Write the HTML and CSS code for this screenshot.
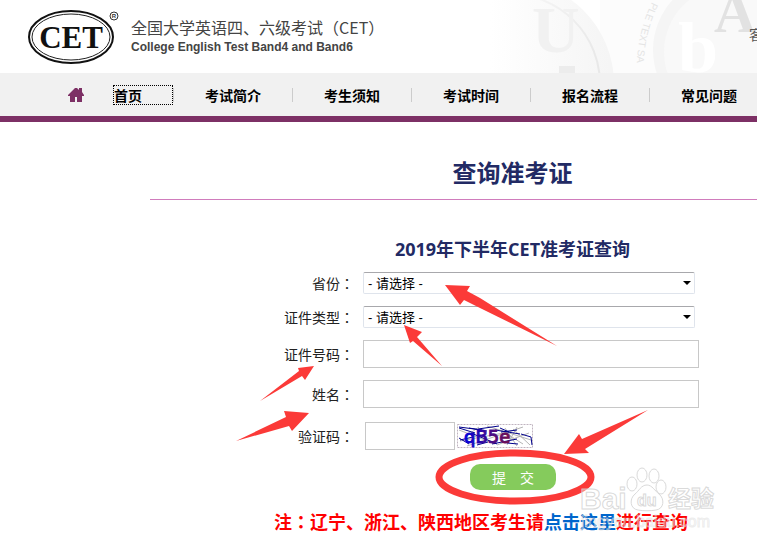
FILE: index.html
```html
<!DOCTYPE html>
<html lang="zh-CN">
<head>
    <meta charset="UTF-8">
    <meta name="viewport" content="width=device-width, initial-scale=1.0">
    <title>查询准考证</title>
    <link rel="stylesheet" href="styles.css">
</head>
<body>

    <header>
        <svg class="logo" width="92" height="58" viewBox="0 0 92 58" aria-label="CET">
            <ellipse cx="43" cy="29" rx="42" ry="26" fill="#fff" stroke="#111" stroke-width="2"/>
            <ellipse cx="43" cy="29" rx="39" ry="23" fill="none" stroke="#222" stroke-width="1"/>
            <text x="43" y="40" class="logo-text">CET</text>
            <circle cx="86" cy="8" r="4" fill="none" stroke="#333"/>
            <text x="86" y="10" class="logo-mark">R</text>
        </svg>
        <div class="site-name">
            <p class="name-cn">全国大学英语四、六级考试（CET）</p>
            <p class="name-en">College English Test Band4 and Band6</p>
        </div>
        <svg class="header-art" width="267" height="73" viewBox="0 0 267 73" aria-hidden="true">
            <defs>
                <linearGradient id="fade" gradientUnits="userSpaceOnUse" x1="0" x2="120" y1="0" y2="0">
                    <stop offset="0" stop-color="#fff"/>
                    <stop offset="1" stop-color="#f5f5f5"/>
                </linearGradient>
                <linearGradient id="rim" gradientUnits="userSpaceOnUse" x1="0" x2="110" y1="0" y2="0">
                    <stop offset="0" stop-color="#fff"/>
                    <stop offset="1" stop-color="#e8e8e8"/>
                </linearGradient>
            </defs>
            <rect x="110" width="157" height="73" fill="#fcfcfc"/>
            <circle cx="20" cy="84" r="104" fill="url(#fade)"/>
            <circle cx="20" cy="84" r="90" fill="url(#fade)" stroke="url(#rim)" stroke-width="2"/>
            <text x="42" y="52" class="art-letter art-u">U</text>
            <rect x="69" y="66" width="16" height="7" fill="#ececec"/>
            <path id="ring" d="M162 2Q146 34 147 73" fill="none"/>
            <text class="art-ring"><textPath href="#ring">PLE TEXT SA</textPath></text>
            <circle cx="237" cy="50" r="74" fill="#f5f5f5"/>
            <circle cx="240" cy="52" r="66" fill="#f9f9f9"/>
            <text x="188" y="72" class="art-letter art-b">b</text>
            <text x="224" y="32" class="art-letter art-a">A</text>
        </svg>
        <a href="#" class="service">客服</a>
    </header>

    <nav>
        <svg class="home-icon" width="16" height="14" viewBox="0 0 16 14" aria-hidden="true">
            <path d="M7 0h2l2 2V0h3v4l2 3v1h-2v6H9V9H7v5H2V8H0V7z" fill="#7d3065"/>
        </svg>
        <a href="#" class="home-link">首页</a>
        <ul>
            <li><a href="#">考试简介</a></li>
            <li><a href="#">考生须知</a></li>
            <li><a href="#">考试时间</a></li>
            <li><a href="#">报名流程</a></li>
            <li><a href="#">常见问题</a></li>
        </ul>
    </nav>

    <main>
        <h1>查询准考证</h1>

        <form>
            <h2>2019年下半年CET准考证查询</h2>

            <div class="row">
                <label for="province">省份<span lang="zh-TW" class="colon">：</span></label>
                <div class="select-box">
                    <select id="province"><option>- 请选择 -</option></select>
                </div>
            </div>
            <div class="row">
                <label for="id-type">证件类型<span lang="zh-TW" class="colon">：</span></label>
                <div class="select-box">
                    <select id="id-type"><option>- 请选择 -</option></select>
                </div>
            </div>
            <div class="row">
                <label for="id-number">证件号码<span lang="zh-TW" class="colon">：</span></label>
                <input type="text" id="id-number">
            </div>
            <div class="row">
                <label for="name">姓名<span lang="zh-TW" class="colon">：</span></label>
                <input type="text" id="name">
            </div>
            <div class="row code-row">
                <label for="code">验证码<span lang="zh-TW" class="colon">：</span></label>
                <div class="code">
                    <input type="text" id="code">
                    <svg width="76" height="24" viewBox="0 0 76 24" aria-hidden="true">
                        <defs>
                            <linearGradient id="ink" gradientUnits="userSpaceOnUse" x1="6" x2="57" y1="0" y2="0">
                                <stop offset="0" stop-color="#0000e0"/>
                                <stop offset="1" stop-color="#801040"/>
                            </linearGradient>
                        </defs>
                        <rect x="0.5" y="0.5" width="75" height="23" fill="#fff" stroke="#c0b4c0" stroke-dasharray="2 1"/>
                        <path d="M2 6L38 20M10 22L66 3M30 2L74 16M40 21L72 9M3 17L52 8M48 4L60 22M56 5L73 21M22 3L8 13M60 3L50 21M66 20L44 6" fill="none" stroke="#b5b5b5"/>
                        <path d="M2 3L25 6M12 4L30 7M2 14L12 20M3 16L16 13M14 9L40 20M21 5L42 2M38 6L63 10M35 20L60 15M50 19L61 20M64 10L74 13L75 21M43 4L52 8M20 21L31 18M2 4L18 9M44 8L60 6" fill="none" stroke="#00008b"/>
                        <text x="7" y="19" class="code-text">qB5e</text>
                    </svg>
                </div>
            </div>

            <button type="button" class="submit">提　交</button>
            <p class="note">注<span lang="zh-TW" class="colon">：</span>辽宁、浙江、陕西地区考生请<a href="#">点击这里</a>进行查询</p>
        </form>
    </main>

    <!-- guide arrows and watermark lying over the form -->
    <svg class="guide" width="757" height="549" viewBox="0 0 757 549" aria-hidden="true">
        <g fill="#fb3a38">
            <path d="M445 285L470 286L467 291L480 298L557 346L480 308L464 300L460 305z"/>
            <path d="M404 325L422 332L417 337L442 366L413 341L410 343z"/>
            <path d="M314 366L298 368L299 371L260 401L302 376L305 380z"/>
            <path d="M309 413L284 411L286 417L236 441L289 426L292 431z"/>
            <path d="M564 454L579 434L582 439L648 410L585 449L589 453z"/>
        </g>
        <ellipse cx="515" cy="477" rx="76" ry="24" fill="none" stroke="#fb3a38" stroke-width="7"/>
        <g class="watermark">
            <text x="580" y="509" class="wm-bai">Bai</text>
            <ellipse cx="632" cy="484" rx="5" ry="7"/>
            <ellipse cx="642" cy="475" rx="5" ry="7"/>
            <ellipse cx="654" cy="476" rx="5" ry="7"/>
            <ellipse cx="661" cy="487" rx="5" ry="7"/>
            <path d="M647 485c-6 0-8 6-12 9c-6 5-5 15 3 16c5 1 13 1 18 0c8-1 9-11 3-16c-4-3-7-9-12-9z"/>
            <text x="637" y="506" class="wm-du">du</text>
            <text x="668" y="507" class="wm-cn">经验</text>
            <text x="581" y="527" class="wm-url">jingyan.baidu.com</text>
        </g>
    </svg>

</body>
</html>
```
FILE: styles.css
```css
* {
    box-sizing: border-box;
    margin: 0;
    padding: 0;
}

body {
    font-family: 'Noto Sans CJK SC', sans-serif;
    font-size: 14px;
    color: #222;
    background: #fff;
    position: relative;
    overflow: hidden;
}

a {
    text-decoration: none;
}

header {
    height: 73px;
    padding-left: 28px;
    display: flex;
    align-items: center;
    position: relative;
}

.logo {
    flex: none;
}

.logo-text {
    font: bold 31px 'Liberation Serif', serif;
    text-anchor: middle;
    fill: #111;
}

.logo-mark {
    font: bold 6px 'Liberation Sans', sans-serif;
    text-anchor: middle;
    fill: #333;
}

.site-name {
    flex: none;
    margin-left: 11px;
    color: #444;
}

.name-cn {
    font-size: 16px;
    line-height: 20px;
}

.name-en {
    font: bold 12px/20px 'Liberation Sans', sans-serif;
}

.header-art {
    flex: none;
    margin-left: auto;
}

.art-letter {
    font-family: 'Liberation Serif', serif;
    font-weight: bold;
}

.art-u {
    font-size: 66px;
    fill: #f1f1f1;
}

.art-b {
    font-size: 72px;
    fill: #fff;
}

.art-a {
    font-size: 58px;
    fill: #e2e2e2;
}

.art-ring {
    font: 10px 'Liberation Sans', sans-serif;
    fill: #e4e4e4;
}

.service {
    position: absolute;
    top: 24px;
    right: -20px;
    color: #555;
    line-height: 20px;
}

nav {
    height: 49px;
    padding-left: 68px;
    display: flex;
    align-items: center;
    background: #f1f1f1;
    border-bottom: 6px solid #7d3065;
}

nav a {
    color: #000;
    font-weight: bold;
}

.home-icon {
    flex: none;
}

.home-link {
    flex: none;
    width: 60px;
    margin-left: 29px;
    line-height: 18px;
    border: 1px dotted #000;
}

nav ul {
    display: flex;
    list-style: none;
}

nav li {
    width: 119px;
    line-height: 14px;
    text-align: center;
    border-left: 1px solid #ccc;
}

main {
    margin-left: 150px;
}

h1 {
    padding: 34px 0 11px 118px;
    border-bottom: 1px solid #d07cbc;
    color: #222a64;
    font-size: 24px;
    line-height: 32px;
    text-align: center;
}

h2 {
    margin: 36px 0 10px;
    padding-left: 118px;
    color: #222a64;
    font-family: 'Open Sans', 'Noto Sans CJK SC', sans-serif;
    font-size: 18px;
    line-height: 26px;
    text-align: center;
}

.colon {
    font-family: 'Noto Sans CJK TC', sans-serif;
}

.row {
    display: grid;
    grid-template-columns: 204px 336px;
    column-gap: 9px;
    align-items: center;
    margin-bottom: 12px;
}

.row label {
    line-height: 20px;
    text-align: right;
}

.row input {
    width: 100%;
    height: 28px;
    padding: 0 4px;
    border: 1px solid #c8c8c8;
}

.select-box {
    margin-right: 4px;
    display: grid;
    position: relative;
}

.select-box::after {
    content: '';
    position: absolute;
    top: 9px;
    right: 4px;
    border: 4px solid transparent;
    border-top-color: #000;
    border-bottom: 0;
}

select {
    height: 22px;
    padding-left: 4px;
    appearance: none;
    background: #fff;
    border: 1px solid #dfe4ec;
    border-top-color: #a8a8ac;
    border-radius: 2px;
    color: #000;
    font: 13px 'Liberation Sans', 'Noto Sans CJK SC', sans-serif;
}

.code-row {
    height: 32px;
}

.code {
    padding-left: 2px;
    display: flex;
    align-items: center;
    gap: 2px;
}

.code input {
    width: 90px;
}

.code-text {
    font: 18px 'DejaVu Sans', sans-serif;
    fill: url(#ink);
    stroke: url(#ink);
}

.submit {
    display: block;
    width: 86px;
    height: 26px;
    margin-left: 320px;
    border: none;
    border-radius: 10px;
    background: #85cb5c;
    color: #fff;
    font-family: inherit;
    font-size: 14px;
    cursor: pointer;
}

.note {
    margin-top: 18px;
    padding-left: 124px;
    color: #f00;
    font-size: 18px;
    font-weight: bold;
    line-height: 26px;
    white-space: nowrap;
}

.note a {
    color: #0066cc;
}

.guide {
    position: absolute;
    top: 0;
    left: 0;
    pointer-events: none;
}

.watermark {
    fill: #fff;
    fill-opacity: 0.4;
    stroke: #d0d0d0;
    stroke-opacity: 0.8;
    font-family: 'Liberation Sans', sans-serif;
}

.wm-bai {
    font-size: 30px;
    font-weight: bold;
}

.wm-du {
    font-size: 16px;
    font-weight: bold;
}

.wm-cn {
    font-family: 'Noto Sans CJK SC', sans-serif;
    font-size: 23px;
    font-weight: bold;
}

.wm-url {
    font-size: 16px;
    stroke-opacity: 0.4;
}
```
